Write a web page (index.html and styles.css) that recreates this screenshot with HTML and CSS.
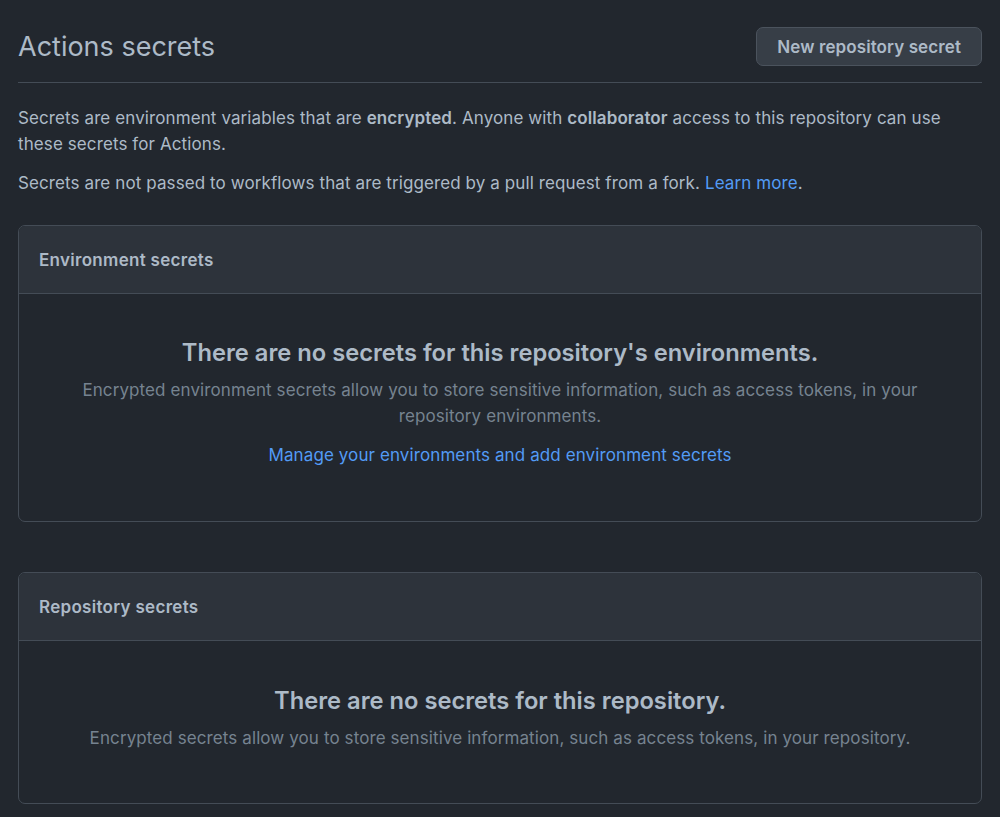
FILE: index.html
```html
<!DOCTYPE html>
<html lang="en">
<head>
<meta charset="utf-8">
<title>Actions secrets</title>
<link rel="stylesheet" href="styles.css">
</head>
<body>
<div class="page">
  <div class="subhead">
    <h1 class="subhead-title">Actions secrets</h1>
    <button class="btn">New repository secret</button>
  </div>
  <p class="intro">Secrets are environment variables that are <strong>encrypted</strong>. Anyone with <strong>collaborator</strong> access to this repository can use these secrets for Actions.</p>
  <p class="intro second">Secrets are not passed to workflows that are triggered by a pull request from a fork. <a href="#">Learn more</a>.</p>

  <section class="box">
    <div class="box-header">Environment secrets</div>
    <div class="blankslate">
      <h3 class="blank-title">There are no secrets for this repository's environments.</h3>
      <p class="blank-desc">Encrypted environment secrets allow you to store sensitive information, such as access tokens, in your repository environments.</p>
      <a class="blank-link" href="#">Manage your environments and add environment secrets</a>
    </div>
  </section>

  <section class="box box-second">
    <div class="box-header">Repository secrets</div>
    <div class="blankslate">
      <h3 class="blank-title">There are no secrets for this repository.</h3>
      <p class="blank-desc">Encrypted secrets allow you to store sensitive information, such as access tokens, in your repository.</p>
    </div>
  </section>
</div>
</body>
</html>
```

FILE: styles.css
```css
html, body {
  margin: 0;
  padding: 0;
  background: #22272e;
}
body {
  font-family: Inter, "Noto Sans", "Liberation Sans", sans-serif;
  color: #adbac7;
  font-size: 17px;
  line-height: 26px;
  letter-spacing: 0.1px;
}
.page {
  padding: 0 18px;
}
.subhead {
  display: flex;
  justify-content: space-between;
  align-items: center;
  padding-top: 27px;
  padding-bottom: 16px;
  border-bottom: 1px solid #444c56;
}
.subhead-title {
  margin: 0;
  font-size: 27px;
  font-weight: 400;
  line-height: 39px;
  letter-spacing: 0;
  color: #adbac7;
}
.btn {
  height: 39px;
  padding: 0 20px;
  background: #373e47;
  border: 1px solid #4b535d;
  border-radius: 7px;
  color: #adbac7;
  font-family: inherit;
  font-size: 17px;
  font-weight: 600;
  letter-spacing: 0.1px;
}
.intro {
  margin: 22px 0 0;
}
.intro.second {
  margin-top: 13px;
}
strong {
  font-weight: 600;
}
a {
  color: #539bf5;
  text-decoration: none;
}
.box {
  margin-top: 29px;
  border: 1px solid #444c56;
  border-radius: 7px;
  overflow: hidden;
}
.box-second {
  margin-top: 50px;
}
.box-header {
  background: #2d333b;
  border-bottom: 1px solid #444c56;
  padding: 21px 20px 20px 20px;
  height: 26px;
  font-weight: 600;
  letter-spacing: 0.3px;
}
.blankslate {
  padding: 41px 60px 53px;
  text-align: center;
}
.box-second .blankslate {
  padding-top: 42px;
  padding-bottom: 52px;
}
.blank-title {
  margin: 0;
  font-size: 23.7px;
  line-height: 36px;
  font-weight: 600;
  letter-spacing: 0;
  color: #adbac7;
}
.blank-desc {
  margin: 6px 0 0;
  color: #768390;
}
.blank-link {
  display: inline-block;
  margin-top: 13px;
}
```
